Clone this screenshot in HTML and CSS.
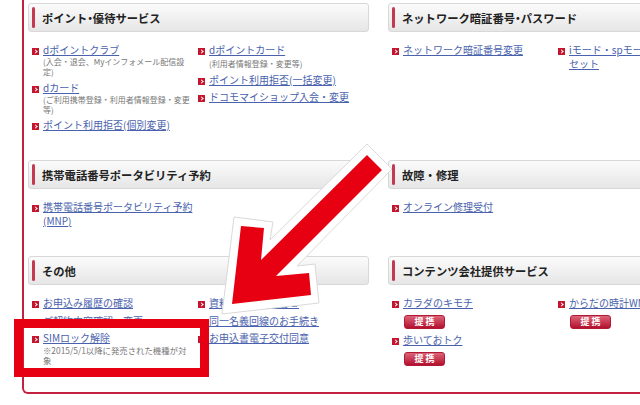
FILE: index.html
```html
<!DOCTYPE html>
<html lang="ja">
<head>
<meta charset="utf-8">
<title>サービス一覧</title>
<link rel="stylesheet" href="styles.css">
</head>
<body>
<div class="frame">
  <div class="grid">
    <section class="panel panel-a">
      <h2 class="head">ポイント<span class="dot">・</span>優待サービス</h2>
      <div class="cols">
        <ul class="col">
          <li><a>dポイントクラブ</a><small>(入会・退会、Myインフォメール配信設定)</small></li>
          <li><a>dカード</a><small>(ご利用携帯登録・利用者情報登録・変更等)</small></li>
          <li><a>ポイント利用拒否(個別変更)</a></li>
        </ul>
        <ul class="col">
          <li><a>dポイントカード</a><small class="single">(利用者情報登録・変更等)</small></li>
          <li><a>ポイント利用拒否(一括変更)</a></li>
          <li><a>ドコモマイショップ入会・変更</a></li>
        </ul>
      </div>
    </section>
    <section class="panel panel-a">
      <h2 class="head">ネットワーク暗証番号<span class="dot">・</span>パスワード</h2>
      <div class="cols">
        <ul class="col"><li><a>ネットワーク暗証番号変更</a></li></ul>
        <ul class="col"><li><a>iモード・spモードパスワードリセット</a></li></ul>
      </div>
    </section>
    <section class="panel panel-b">
      <h2 class="head">携帯電話番号ポータビリティ予約</h2>
      <div class="cols">
        <ul class="col"><li><a>携帯電話番号ポータビリティ予約(MNP)</a></li></ul>
        <ul class="col"></ul>
      </div>
    </section>
    <section class="panel panel-b">
      <h2 class="head">故障・修理</h2>
      <div class="cols">
        <ul class="col"><li><a>オンライン修理受付</a></li></ul>
        <ul class="col"></ul>
      </div>
    </section>
    <section class="panel">
      <h2 class="head">その他</h2>
      <div class="cols">
        <ul class="col">
          <li><a>お申込み履歴の確認</a></li>
          <li><a>ご契約内容確認・変更</a></li>
          <li><a>SIMロック解除</a><small class="note">※2015/5/1以降に発売された機種が対象</small></li>
        </ul>
        <ul class="col">
          <li><a>資料請求・お問合せ</a></li>
          <li><a>同一名義回線のお手続き</a></li>
          <li><a>お申込書電子交付同意</a></li>
        </ul>
      </div>
    </section>
    <section class="panel">
      <h2 class="head">コンテンツ会社提供サービス</h2>
      <div class="cols">
        <ul class="col">
          <li><a>カラダのキモチ</a><span class="tag">提 携</span></li>
          <li><a>歩いておトク</a><span class="tag">提 携</span></li>
        </ul>
        <ul class="col">
          <li><a class="nowrap">からだの時計WM</a><span class="tag">提 携</span></li>
        </ul>
      </div>
    </section>
  </div>
</div>
<div class="callout" aria-hidden="true"></div>
<svg class="arrow" width="640" height="405" viewBox="0 0 640 405" aria-hidden="true">
  <polygon class="arrow-edge" points="367,144 392,169 297,266 315,264 319,303 222,314 234,217 273,222 270,240"/>
  <polygon class="arrow-fill" points="367,155 382,170 276,276 309,273 311,295 232,304 241,226 264,228 261,260"/>
</svg>
</body>
</html>
```
FILE: styles.css
```css
html, body { margin: 0; padding: 0; }
body {
  width: 640px;
  height: 405px;
  overflow: hidden;
  position: relative;
  background: #fff;
  font-family: "Liberation Sans", "Noto Sans CJK JP", sans-serif;
}
.frame {
  box-sizing: border-box;
  width: 700px;
  height: 400px;
  margin: -6px 0 0 22px;
  padding: 9px 0 0 4px;
  border: 2px solid #c3213f;
  border-top: 0;
  border-radius: 0 0 6px 6px;
}
.grid {
  display: grid;
  grid-template-columns: 341px 341px;
  column-gap: 19px;
}
.panel-a { height: 157px; }
.panel-b { height: 96px; }
.head {
  box-sizing: border-box;
  height: 29px;
  margin: 0;
  padding: 0 0 0 13px;
  position: relative;
  border: 1px solid #d8d8d8;
  border-radius: 3px;
  background: linear-gradient(#fbfbfb, #e6e6e6);
  font: bold 11.3px/29px "Noto Sans CJK JP", sans-serif;
  color: #222;
}
.head::before {
  content: "";
  position: absolute;
  left: 3px;
  top: 3px;
  bottom: 3px;
  width: 3px;
  border-radius: 2px;
  background: #c33a50;
}
.dot { font-feature-settings: "halt"; }
.cols {
  display: grid;
  grid-template-columns: 166px 166px;
  padding: 11px 0 0 4px;
}
.col { list-style: none; margin: 0; padding: 0; }
.col li {
  position: relative;
  padding-left: 11px;
  margin-bottom: 3.5px;
  width: 152px;
}
.col li::before {
  content: "";
  position: absolute;
  left: 0;
  top: 5px;
  width: 7px;
  height: 7px;
  background: #c4172f;
}
.col li::after {
  content: "";
  position: absolute;
  left: 2px;
  top: 7px;
  width: 2px;
  height: 2px;
  border-top: 1px solid #fff;
  border-right: 1px solid #fff;
  transform: rotate(45deg);
}
.col a {
  display: block;
  font: 10px/14px "Noto Sans CJK JP", sans-serif;
  color: #4a62ad;
  text-decoration: underline;
}
.col .nowrap { white-space: nowrap; }
.col small {
  display: block;
  width: 150px;
  font: 8px/10px "Noto Sans CJK JP", sans-serif;
  color: #777;
}
.col small.single { margin: 2px 0 1.5px; }
.col small.note { font-size: 8.4px; }
.tag {
  display: block;
  box-sizing: border-box;
  width: 41px;
  height: 14px;
  margin: 5px 0 0 1px;
  border: 1px solid #b01a34;
  border-radius: 3px;
  background: linear-gradient(#dc6478, #b3102e);
  color: #fff;
  font: bold 9px/12px "Noto Sans CJK JP", sans-serif;
  text-align: center;
}
.callout {
  position: absolute;
  left: 14px;
  top: 319px;
  width: 177px;
  height: 40px;
  border: 9px solid #e60012;
}
.arrow { position: absolute; left: 0; top: 0; }
.arrow-edge { fill: #fff; stroke: #d9d9d9; stroke-width: 1; }
.arrow-fill { fill: #e60012; }
```
